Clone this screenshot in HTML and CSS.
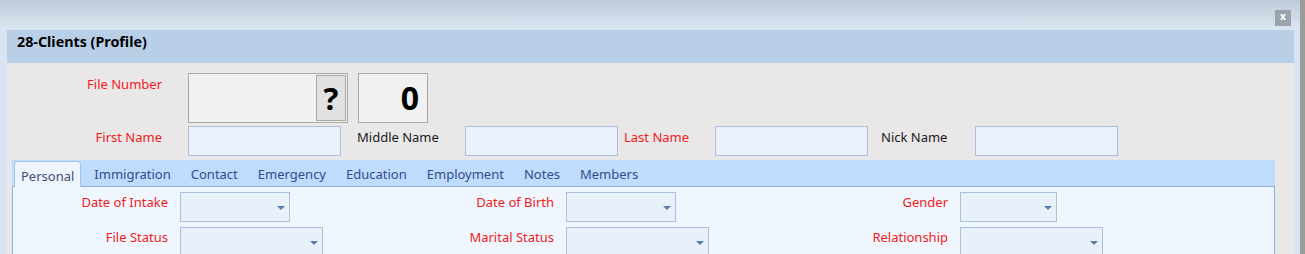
FILE: index.html
```html
<!DOCTYPE html>
<html lang="en">
<head>
    <meta charset="UTF-8">
    <meta name="viewport" content="width=device-width, initial-scale=1.0">
    <title>28-Clients (Profile)</title>
    <link rel="stylesheet" href="styles.css">
</head>
<body>
    <div class="window">
        <div class="titlebar">
            <span class="close-btn">x</span>
        </div>
        <div class="frame">
            <div class="form">
                <div class="form-header">28-Clients (Profile)</div>
                <div class="form-body">
                    <div class="row row-file">
                        <label class="label required w-first">File Number</label>
                        <div class="file-box">
                            <span class="lookup-btn">?</span>
                        </div>
                        <div class="count-box">0</div>
                    </div>
                    <div class="row row-names">
                        <label class="label required w-first">First Name</label>
                        <input class="text-input in-first" type="text">
                        <label class="label w-middle">Middle Name</label>
                        <input class="text-input in-middle" type="text">
                        <label class="label required w-last">Last Name</label>
                        <input class="text-input in-last" type="text">
                        <label class="label w-nick">Nick Name</label>
                        <input class="text-input in-nick" type="text">
                    </div>

                    <div class="tabs">
                        <div class="tab-strip">
                            <span class="tab active">Personal</span>
                            <span class="tab">Immigration</span>
                            <span class="tab">Contact</span>
                            <span class="tab">Emergency</span>
                            <span class="tab">Education</span>
                            <span class="tab">Employment</span>
                            <span class="tab">Notes</span>
                            <span class="tab">Members</span>
                        </div>
                        <div class="tab-page">
                            <div class="field-grid">
                                <label class="label required">Date of Intake</label>
                                <div><div class="combo w-short"></div></div>
                                <label class="label required">Date of Birth</label>
                                <div><div class="combo w-short"></div></div>
                                <label class="label required">Gender</label>
                                <div><div class="combo w-tiny"></div></div>

                                <label class="label required">File Status</label>
                                <div><div class="combo w-long"></div></div>
                                <label class="label required">Marital Status</label>
                                <div><div class="combo w-long"></div></div>
                                <label class="label required">Relationship</label>
                                <div><div class="combo w-long"></div></div>
                            </div>
                        </div>
                    </div>
                </div>
            </div>
        </div>
    </div>
</body>
</html>
```

FILE: styles.css
```css
* {
    box-sizing: border-box;
}

body {
    margin: 0;
    font-family: 'Noto Sans', 'Open Sans', sans-serif;
    font-size: 13px;
    color: #1a1a1a;
    background-color: #dbe6f2;
    overflow: hidden;
}

.window {
    width: 1305px;
    height: 254px;
    border-right: 5px solid #9c9c9c;
    background-color: #d8e4f1;
    overflow: hidden;
}

.titlebar {
    height: 30px;
    display: flex;
    justify-content: flex-end;
    align-items: flex-start;
    padding: 10px 9px 0 0;
    background: linear-gradient(to bottom, #bfccd9, #dae6f2);
}

.close-btn {
    width: 16px;
    height: 16px;
    background-color: #9aa3ab;
    color: #ffffff;
    font-family: 'DejaVu Sans', sans-serif;
    font-weight: bold;
    font-size: 10px;
    line-height: 14px;
    text-align: center;
}

.frame {
    padding: 0 6px 0 7px;
}

.form {
    width: 1287px;
    height: 224px;
    background-color: #e9e7e8;
}

.form-header {
    height: 33px;
    padding: 1px 0 0 10px;
    background-color: #b9cfe7;
    color: #000000;
    font-weight: bold;
    font-size: 14.3px;
    line-height: 22px;
}

.form-body {
    padding-top: 10px;
}

.row {
    display: flex;
    align-items: flex-start;
}

.label {
    font-size: 13px;
    line-height: 18px;
    padding-top: 2px;
    white-space: nowrap;
}

.required {
    color: #f21b1b;
}

.w-first {
    width: 155px;
    text-align: right;
    margin-right: 26px;
}

/* File number row */
.row-file {
    height: 50px;
}

.file-box {
    width: 160px;
    height: 50px;
    border: 1px solid #a9a9a9;
    background-color: #f1f1f1;
    display: flex;
    justify-content: flex-end;
    padding: 1px;
}

.lookup-btn {
    width: 30px;
    height: 46px;
    border: 1px solid #a9a9a9;
    background-color: #e1e1e1;
    color: #000000;
    font-weight: bold;
    font-size: 31px;
    line-height: 45px;
    text-align: center;
}

.count-box {
    width: 70px;
    height: 50px;
    margin-left: 10px;
    border: 1px solid #a9a9a9;
    background-color: #f1f1f1;
    color: #000000;
    font-weight: bold;
    font-size: 32px;
    line-height: 48px;
    text-align: right;
    padding-right: 8px;
}

/* Name row */
.row-names {
    margin-top: 3px;
    height: 30px;
}

.text-input {
    height: 30px;
    border: 1px solid #a9c0de;
    background-color: #eaf1fb;
    margin: 0;
    padding: 0 4px;
    font: inherit;
}

.in-first {
    width: 153px;
}

.w-middle {
    width: 124px;
    padding-left: 16px;
}

.in-middle {
    width: 153px;
}

.w-last {
    width: 97px;
    padding-left: 6px;
    margin-right: 0;
}

.in-last {
    width: 153px;
}

.w-nick {
    width: 107px;
    padding-left: 13px;
}

.in-nick {
    width: 143px;
}

/* Tabs */
.tabs {
    margin: 4px 0 0 5px;
    width: 1263px;
}

.tab-strip {
    height: 27px;
    display: flex;
    align-items: flex-end;
    gap: 6px;
    padding-left: 2px;
    background-color: #bfdbfe;
    border-bottom: 1px solid #8ab0e0;
}

.tab {
    height: 25px;
    padding: 0 7px;
    line-height: 27px;
    color: #2f4d8a;
    white-space: nowrap;
}

.tab.active {
    height: 26px;
    margin-bottom: -1px;
    background-color: #eef5fd;
    border: 1px solid #a6c4ea;
    border-bottom: none;
    border-radius: 3px 3px 0 0;
    color: #3d4f74;
    padding: 0 6px;
    line-height: 28px;
}

.tab-page {
    height: 80px;
    background-color: #eff6fe;
    border-left: 1px solid #8ab0e0;
    border-right: 1px solid #8ab0e0;
    padding-top: 5px;
}

.field-grid {
    display: grid;
    grid-template-columns: 155px 200px 162px 200px 170px 200px;
    column-gap: 12px;
    row-gap: 5px;
}

.field-grid .label {
    text-align: right;
    padding-top: 1px;
}

.combo {
    position: relative;
    height: 30px;
    border: 1px solid #a9c0de;
    background-color: #e8f0fa;
}

.combo::after {
    content: "";
    position: absolute;
    right: 4px;
    top: 13px;
    border-left: 4px solid transparent;
    border-right: 4px solid transparent;
    border-top: 4px solid #5a7cad;
}

.w-short {
    width: 110px;
}

.w-tiny {
    width: 97px;
}

.w-long {
    width: 143px;
}
```
